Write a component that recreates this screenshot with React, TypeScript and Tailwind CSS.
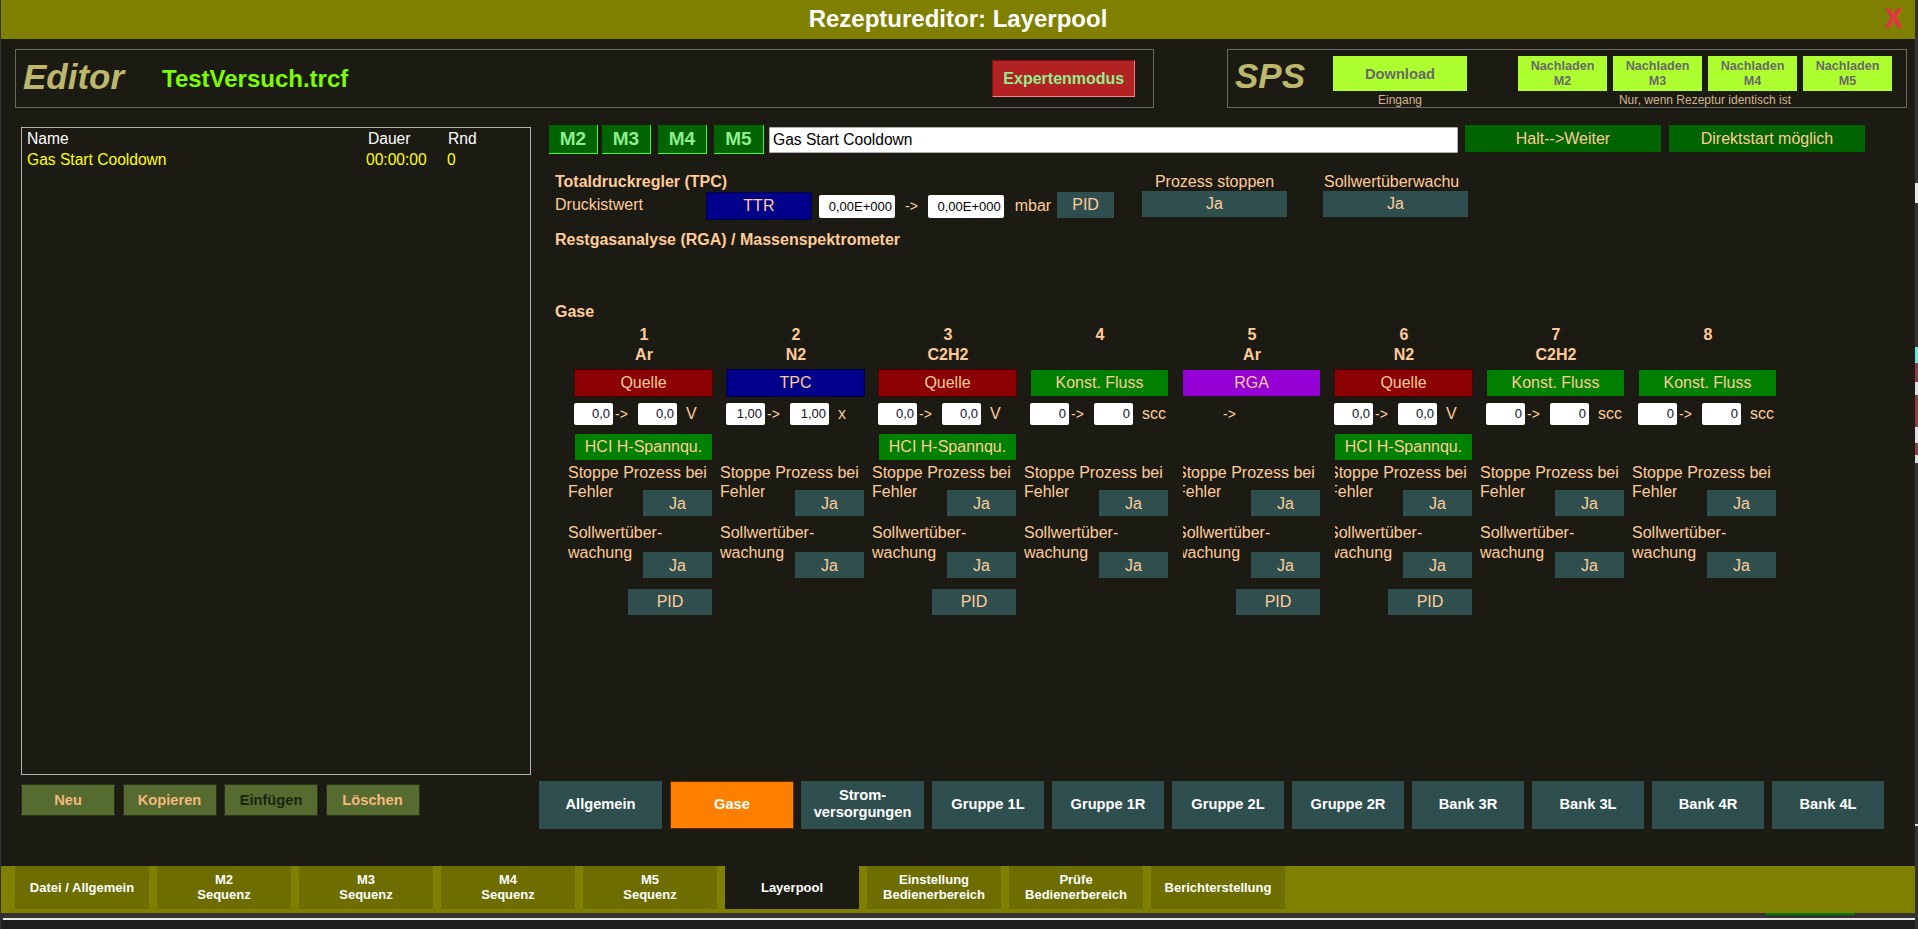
const ink = "text-[#ffcc99]";

const mButtons = [
  { label: "M2", cls: "w-[49px]" },
  { label: "M3", cls: "w-[49px] ml-[4px]" },
  { label: "M4", cls: "w-[49px] ml-[7px]" },
  { label: "M5", cls: "w-[50px] ml-[7px]" },
];

const nachladen = ["M2", "M3", "M4", "M5"];

const gases = [
  { no: 1, name: "Ar", type: "Quelle", typeCls: "bg-[#8b0000] border-[#4a0000]", from: "0,0", to: "0,0", unit: "V", hci: true, pid: true },
  { no: 2, name: "N2", type: "TPC", typeCls: "bg-[#00008b] border-[#000045]", from: "1,00", to: "1,00", unit: "x", hci: false, pid: false },
  { no: 3, name: "C2H2", type: "Quelle", typeCls: "bg-[#8b0000] border-[#4a0000]", from: "0,0", to: "0,0", unit: "V", hci: true, pid: true },
  { no: 4, name: "", type: "Konst. Fluss", typeCls: "bg-[#008000] border-[#1c1b13]", from: "0", to: "0", unit: "scc", hci: false, pid: false },
  { no: 5, name: "Ar", type: "RGA", typeCls: "bg-[#9400d3] border-[#1c1b13]", from: "", to: "", unit: "", hci: false, pid: true, clip: true },
  { no: 6, name: "N2", type: "Quelle", typeCls: "bg-[#8b0000] border-[#4a0000]", from: "0,0", to: "0,0", unit: "V", hci: true, pid: true, clip: true },
  { no: 7, name: "C2H2", type: "Konst. Fluss", typeCls: "bg-[#008000] border-[#1c1b13]", from: "0", to: "0", unit: "scc", hci: false, pid: false },
  { no: 8, name: "", type: "Konst. Fluss", typeCls: "bg-[#008000] border-[#1c1b13]", from: "0", to: "0", unit: "scc", hci: false, pid: false },
];

const pageTabs = [
  { label: "Allgemein", cls: "w-[123px] bg-[#2f4f4f]" },
  { label: "Gase", cls: "w-[124px] ml-[8px] bg-[#ff8000] border border-[#5a2f00]" },
  { label: "Strom-\nversorgungen", cls: "w-[123px] ml-[7px] bg-[#2f4f4f]" },
  { label: "Gruppe 1L", cls: "w-[112px] ml-[8px] bg-[#2f4f4f]" },
  { label: "Gruppe 1R", cls: "w-[112px] ml-[8px] bg-[#2f4f4f]" },
  { label: "Gruppe 2L", cls: "w-[112px] ml-[8px] bg-[#2f4f4f]" },
  { label: "Gruppe 2R", cls: "w-[112px] ml-[8px] bg-[#2f4f4f]" },
  { label: "Bank 3R", cls: "w-[112px] ml-[8px] bg-[#2f4f4f]" },
  { label: "Bank 3L", cls: "w-[112px] ml-[8px] bg-[#2f4f4f]" },
  { label: "Bank 4R", cls: "w-[112px] ml-[8px] bg-[#2f4f4f]" },
  { label: "Bank 4L", cls: "w-[112px] ml-[8px] bg-[#2f4f4f]" },
];

const bottomTabs = [
  "Datei / Allgemein",
  "M2\nSequenz",
  "M3\nSequenz",
  "M4\nSequenz",
  "M5\nSequenz",
  "Layerpool",
  "Einstellung\nBedienerbereich",
  "Prüfe\nBedienerbereich",
  "Berichterstellung",
];

function Ja({ className = "" }: { className?: string }) {
  return (
    <div className={`w-[69px] h-[26px] bg-[#2f4f4f] flex items-center justify-center text-[16px] ${ink} ${className}`}>Ja</div>
  );
}

function SmallInput({ value }: { value: string }) {
  return (
    <div className="w-[39px] h-[22px] bg-white rounded-[2px] flex items-center justify-end pr-[3px] text-[13px] text-[#101030]">
      {value}
    </div>
  );
}

function GasColumn({ gas }: { gas: (typeof gases)[number] }) {
  const clip = gas.clip ? "[&>span]:-ml-[7px] [&>span]:block" : "";
  return (
    <div className="w-[152px] shrink-0">
      <div className={`h-[21px] flex items-center justify-center font-bold text-[16px] ${ink}`}>{gas.no}</div>
      <div className={`h-[21px] pb-px flex items-center justify-center font-bold text-[16px] ${ink}`}>{gas.name}</div>
      <div className={`mt-[3px] ml-[6px] w-[139px] h-[28px] border flex items-center justify-center text-[16px] ${ink} ${gas.typeCls}`}>
        {gas.type}
      </div>
      <div className={`mt-[6px] ml-[6px] h-[22px] flex items-center text-[16px] ${ink}`}>
        {gas.from ? <SmallInput value={gas.from} /> : <div className="w-[39px]" />}
        <div className="w-[25px] pl-[2px] text-[14px]">-&gt;</div>
        {gas.to ? <SmallInput value={gas.to} /> : <div className="w-[39px]" />}
        <div className="ml-[9px]">{gas.unit}</div>
      </div>
      <div className="mt-[9px] h-[26px]">
        {gas.hci && (
          <div className={`ml-[7px] w-[137px] h-[26px] bg-[#008000] flex items-center justify-center text-[16px] ${ink}`}>
            HCI H-Spannqu.
          </div>
        )}
      </div>
      <div className={`w-[144px] text-[16px] leading-[19px] ${ink} ${gas.clip ? "pl-[7px]" : ""}`}>
        <div className={`mt-[3px] h-[19px] whitespace-nowrap overflow-hidden ${clip}`}>
          <span>Stoppe Prozess bei</span>
        </div>
        <div className="h-[34px] flex justify-between">
          <div className={`h-[19px] overflow-hidden ${clip}`}>
            <span>Fehler</span>
          </div>
          <Ja className="mt-[8px]" />
        </div>
        <div className={`mt-[7px] h-[19px] whitespace-nowrap overflow-hidden ${clip}`}>
          <span>Sollwertüber-</span>
        </div>
        <div className="mt-px h-[34px] flex justify-between">
          <div className={`h-[19px] overflow-hidden ${clip}`}>
            <span>wachung</span>
          </div>
          <Ja className="mt-[9px]" />
        </div>
      </div>
      {gas.pid && (
        <div className={`mt-[12px] ml-[60px] w-[84px] h-[26px] bg-[#2f4f4f] flex items-center justify-center text-[16px] ${ink}`}>
          PID
        </div>
      )}
    </div>
  );
}

export default function App() {
  return (
    <div className="relative w-full h-screen overflow-hidden flex flex-col bg-[#333333] pl-px pr-[3px] font-['Liberation_Sans',Arial,sans-serif]">
      {/* Titelleiste */}
      <header className="relative h-[39px] shrink-0 bg-[#808000] flex items-center justify-center pb-[2px] text-white font-bold text-[24px]">
        Rezepturedit{"or"}: Layerpool
        <span className="absolute right-[13px] top-[7px] text-[#e0383f] text-[25px] leading-[22px] [-webkit-text-stroke:1px_#e0383f]">X</span>
      </header>

      <main className="flex-1 bg-[#1c1b13] min-h-0">
        {/* Editor / SPS */}
        <div className="mt-[10px] ml-[14px] flex h-[59px]">
          <section className="w-[1139px] border border-[#6a6a62] flex items-center">
            <span className="ml-[7px] -mt-[3px] w-[139px] italic font-bold text-[35px] text-[#bdb76b]">Editor</span>
            <span className="mt-px font-bold text-[24px] text-[#7cfc00]">TestVersuch.trcf</span>
            <button className="ml-[644px] w-[143px] h-[37px] bg-[#b22222] border border-t-[#7a1010] border-l-[#7a1010] border-r-[#ff8080] border-b-[#ff8080] font-bold text-[16px] text-[#90ee90]">
              Expertenmodus
            </button>
          </section>
          <section className="ml-[73px] w-[680px] border border-[#6a6a62] relative flex">
            <span className="ml-[7px] mt-[6px] w-[98px] italic font-bold text-[35px] leading-[40px] text-[#bdb76b]">SPS</span>
            <div className="flex flex-col items-center w-[134px] mt-[6px]">
              <div className="w-[134px] h-[35px] bg-[#adff2f] flex items-center justify-center font-bold text-[14.67px] text-[#696969]">
                Download
              </div>
              <div className="mt-[2px] text-[12px] leading-[14px] text-[#d2b48c]">Eingang</div>
            </div>
            <div className="ml-[51px] mt-[6px] flex flex-col items-center">
              <div className="flex gap-[6px]">
                {nachladen.map((m) => (
                  <div key={m} className="w-[89px] h-[35px] bg-[#adff2f] flex flex-col items-center justify-center font-bold text-[12.6px] leading-[15px] text-[#696969]">
                    <span>Nachladen</span>
                    <span>{m}</span>
                  </div>
                ))}
              </div>
              <div className="mt-[2px] text-[12px] leading-[14px] text-[#d2b48c]">Nur, wenn Rezeptur identisch ist</div>
            </div>
          </section>
        </div>

        <div className="mt-[17px] flex">
          {/* Layerliste */}
          <div className="ml-[20px] w-[510px] shrink-0">
            <div className="mt-[2px] h-[648px] border border-[#b4b4b4] text-[15.6px] relative">
              <div className="flex text-white h-[21px] items-center">
                <span className="ml-[5px] w-[341px]">Name</span>
                <span className="w-[80px]">Dauer</span>
                <span>Rnd</span>
              </div>
              <div className="flex text-[#ffff00] h-[21px] items-center">
                <span className="ml-[5px] w-[339px]">Gas Start Cooldown</span>
                <span className="w-[81px]">00:00:00</span>
                <span>0</span>
              </div>
            </div>
            <div className="mt-[9px] flex gap-[7.5px]">
              {["Neu", "Kopieren", "Einfügen", "Löschen"].map((b) => (
                <div key={b} className={`w-[94px] h-[32px] bg-[#556b2f] border border-[#2a331a] flex items-center justify-center font-bold text-[14.67px] ${b === "Einfügen" ? "text-[#1c2410]" : "text-[#f4b97c]"}`}>
                  {b}
                </div>
              ))}
            </div>
          </div>

          {/* Rezeptschritt */}
          <div className="ml-[8px] flex-1 min-w-0 h-[704px] flex flex-col">
            <div className="ml-[10px] flex">
              {mButtons.map((m) => (
                <div key={m.label} className={`h-[29px] bg-[#006400] border-r border-b border-[#32ff32] flex items-center justify-center font-bold text-[19px] text-[#90ee90] ${m.cls}`}>
                  {m.label}
                </div>
              ))}
              <div className="ml-[5px] mt-[2px] w-[689px] h-[26px] bg-white border border-[#b0b0b0] rounded-[1px] flex items-center pl-[3px] text-[15.6px] text-black">
                Gas Start Cooldown
              </div>
              <div className={`ml-[7px] w-[196px] h-[27px] bg-[#006400] flex items-center justify-center text-[16px] ${ink}`}>Halt--&gt;Weiter</div>
              <div className={`ml-[8px] w-[196px] h-[27px] bg-[#006400] flex items-center justify-center text-[16px] ${ink}`}>Direktstart möglich</div>
            </div>

            <div className={`ml-[16px] mt-[18px] flex text-[16px] ${ink}`}>
              <div className="w-[559px]">
                <div className="h-[19px] leading-[19px] font-bold">Totaldruckregler (TPC)</div>
                <div className="mt-px flex items-start">
                  <span className="w-[151px] h-[26px] leading-[26px]">Druckistwert</span>
                  <div className="w-[107px] h-[28px] bg-[#00008b] border border-[#000045] flex items-center justify-center">TTR</div>
                  <div className="ml-[7px] mt-[3px] w-[76px] h-[23px] bg-white rounded-[2px] flex items-center justify-end pr-[3px] text-[13px] text-black">0,00E+000</div>
                  <div className="w-[33px] h-[28px] leading-[28px] text-center text-[14px]">-&gt;</div>
                  <div className="mt-[3px] w-[76px] h-[23px] bg-white rounded-[2px] flex items-center justify-end pr-[3px] text-[13px] text-black">0,00E+000</div>
                  <span className="ml-[11px] h-[28px] leading-[28px]">mbar</span>
                  <div className="ml-[6px] w-[57px] h-[26px] bg-[#2f4f4f] flex items-center justify-center">PID</div>
                </div>
              </div>
              <div className="ml-[28px] w-[145px]">
                <div className="h-[19px] leading-[19px] text-center">Prozess stoppen</div>
                <div className="h-[26px] bg-[#2f4f4f] flex items-center justify-center">Ja</div>
              </div>
              <div className="ml-[36px] w-[145px]">
                <div className="h-[19px] leading-[19px] pl-[1px] whitespace-nowrap overflow-hidden">Sollwertüberwachu</div>
                <div className="h-[26px] bg-[#2f4f4f] flex items-center justify-center">Ja</div>
              </div>
            </div>

            <div className={`ml-[16px] mt-[10px] h-[19px] leading-[19px] font-bold text-[16px] ${ink}`}>Restgasanalyse (RGA) / Massenspektrometer</div>
            <div className={`ml-[16px] mt-[53px] h-[19px] leading-[19px] font-bold text-[16px] ${ink}`}>Gase</div>

            <div className="ml-[29px] mt-[3px] flex">
              {gases.map((g) => (
                <GasColumn key={g.no} gas={g} />
              ))}
            </div>

            {/* Seiten innerhalb des Layers */}
            <div className="mt-auto flex">
              {pageTabs.map((t) => (
                <div key={t.label} className={`h-[48px] pb-[2px] flex items-center justify-center text-center whitespace-pre-line font-bold text-[14.67px] leading-[17px] text-white ${t.cls}`}>
                  {t.label}
                </div>
              ))}
            </div>
          </div>
        </div>
      </main>

      {/* Reiter unten */}
      <nav className="relative h-[47px] shrink-0 bg-[#808000] flex pl-[14px] gap-[8px]">
        {bottomTabs.map((t) => (
          <div key={t} className={`w-[134px] h-[43px] pb-px flex items-center justify-center text-center whitespace-pre-line font-bold text-[13px] leading-[15px] text-white ${t === "Layerpool" ? "bg-[#1c1b13]" : "bg-[#6e6e00]"}`}>
            {t}
          </div>
        ))}
        <div className="absolute left-[1765px] -bottom-[2px] w-[89px] h-[2px] bg-[#008000]" />
      </nav>
      <div className="h-[16px] shrink-0 relative">
        <div className="mt-[5px] ml-[2px] h-[2px] bg-[#e8e8e8]" />
        <div className="absolute inset-x-0 top-[7px] bottom-0 bg-[#1e1e1e]" />
      </div>

      {/* Reste des Fensters dahinter am rechten Rand */}
      <div className="absolute right-0 top-[183px] w-[3px] h-[20px] bg-[#e8e8e8]" />
      <div className="absolute right-0 top-[347px] w-[3px] flex flex-col">
        <div className="h-[16px] bg-[#5fe8e8]" />
        <div className="h-[19px] bg-[#8c3c44]" />
        <div className="h-[13px] bg-[#e0e0e0]" />
        <div className="h-[32px] bg-[#8c3c44]" />
        <div className="h-[16px] bg-[#e0e0e0]" />
        <div className="h-[12px] bg-[#8c3c44]" />
        <div className="h-[8px] bg-[#e0e0e0]" />
      </div>
      <div className="absolute right-0 top-[824px] w-[3px] h-[2px] bg-[#d8d8d8]" />
    </div>
  );
}
